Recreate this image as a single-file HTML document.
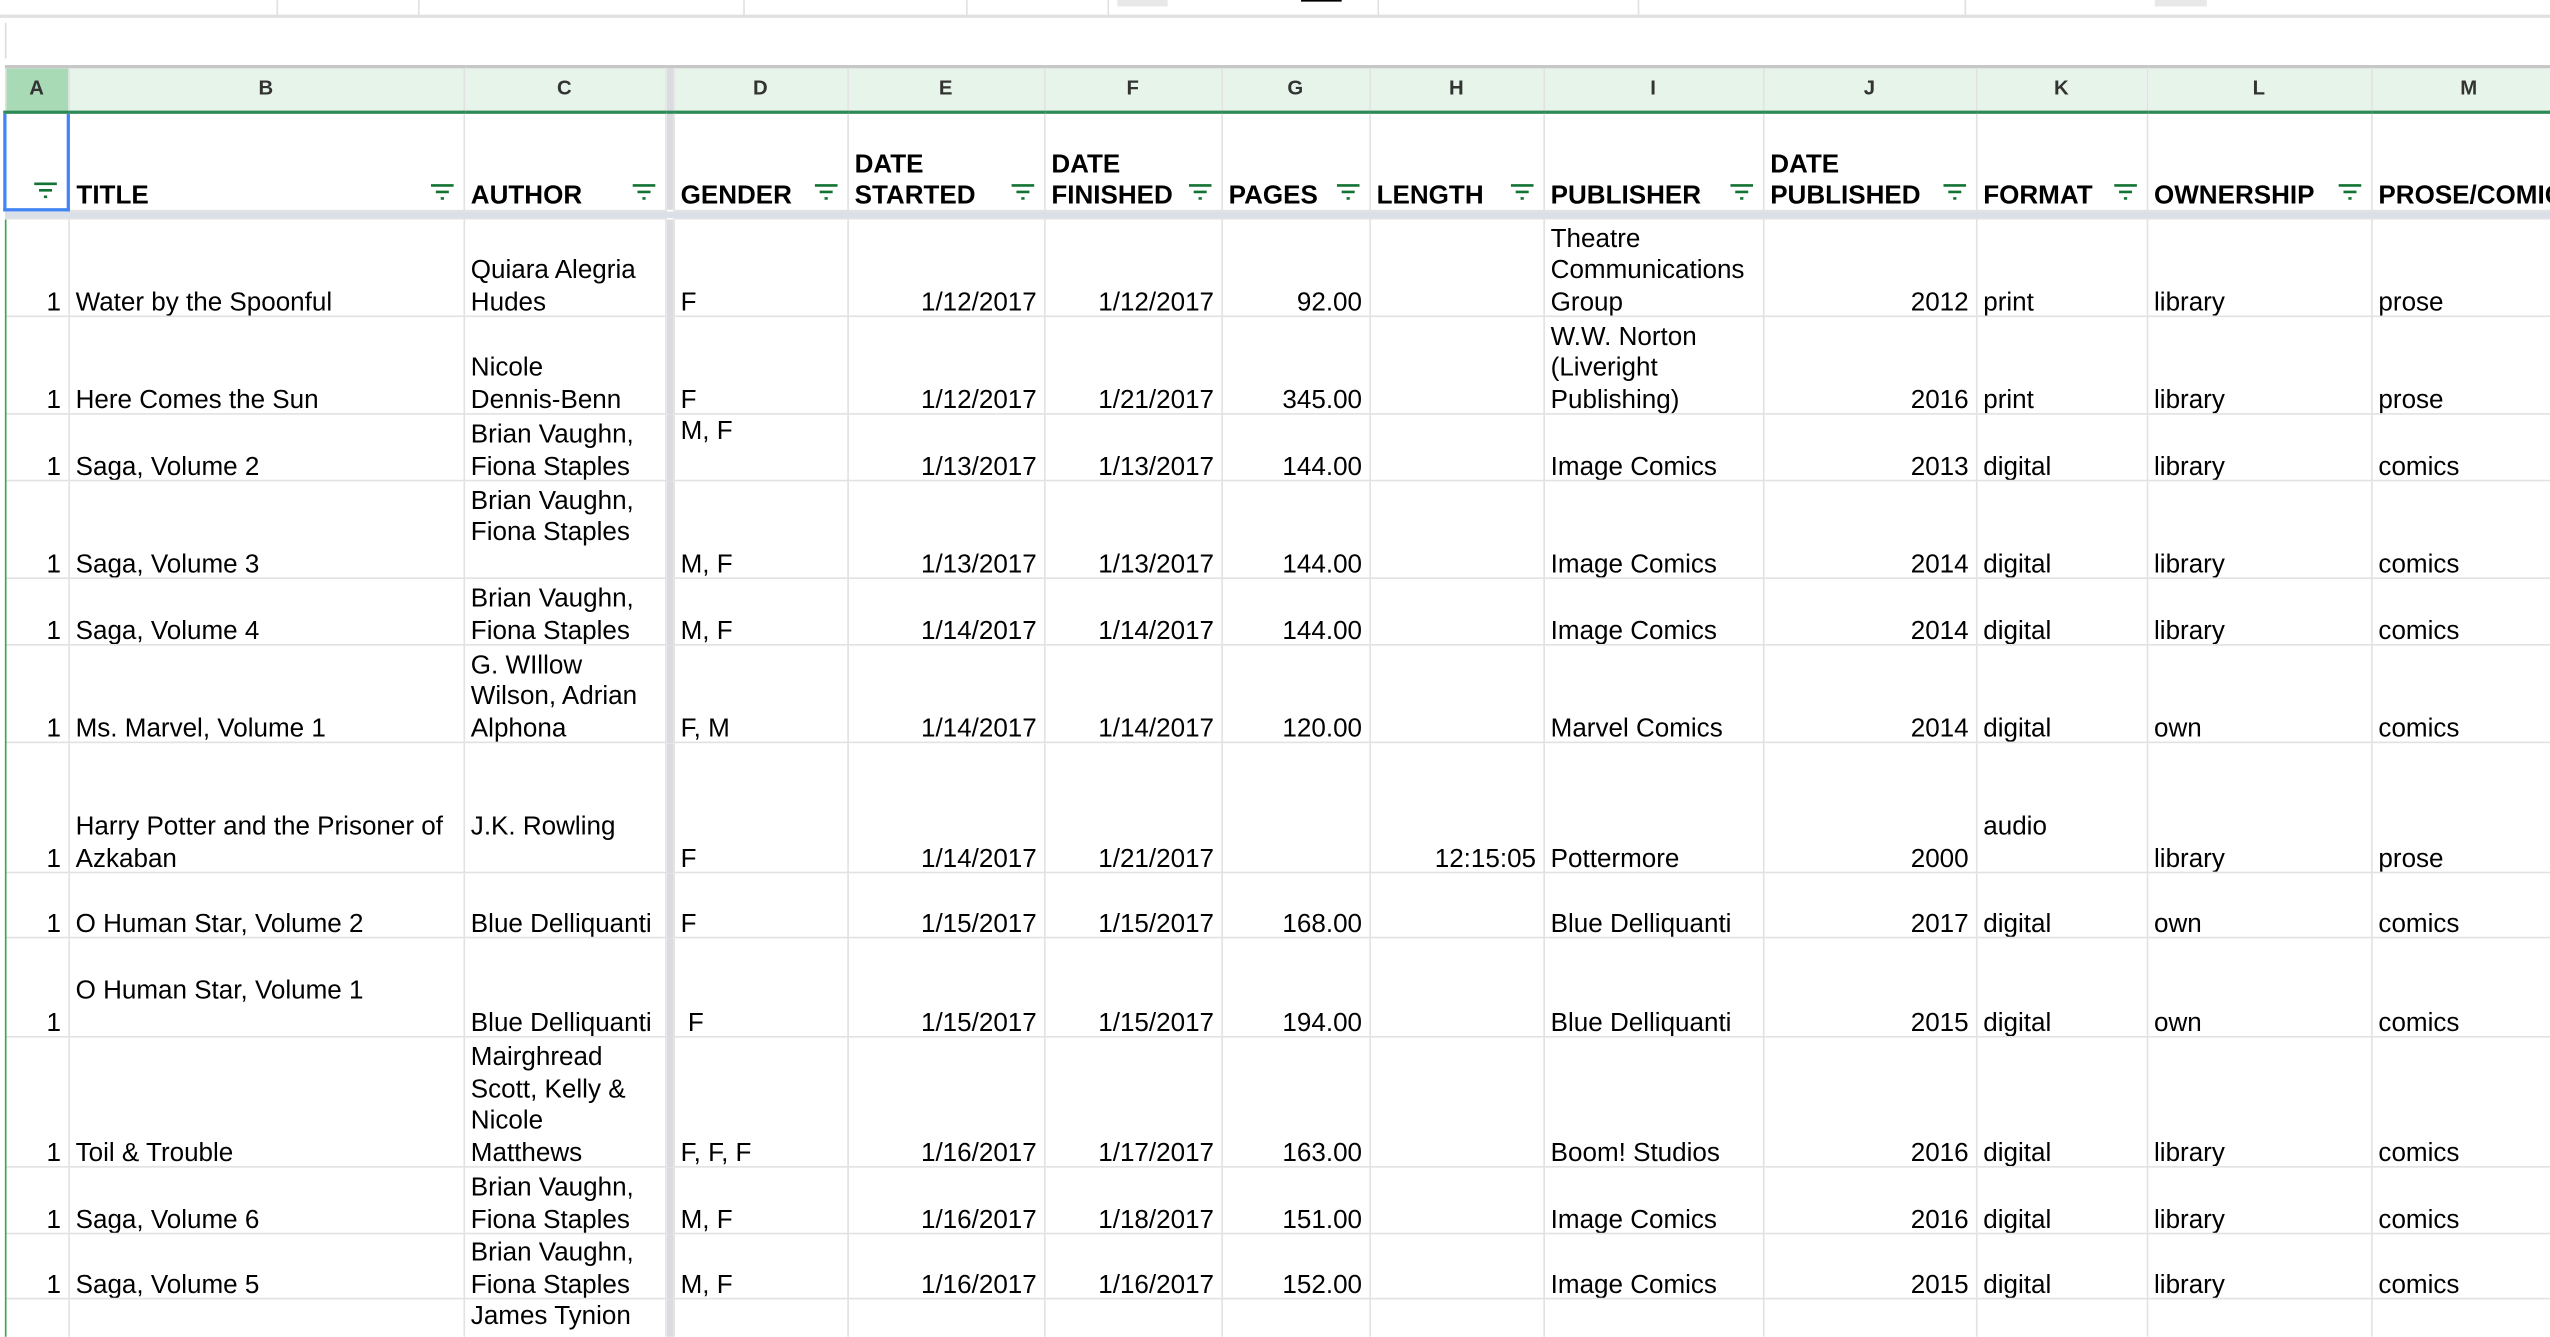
<!DOCTYPE html>
<html><head><meta charset="utf-8"><style>
html,body{margin:0;padding:0;background:#fff;}
body{width:2550px;height:1336px;overflow:hidden;position:relative;}
#w{position:absolute;left:0;top:0;width:1568px;height:822px;transform:scale(1.62628);transform-origin:0 0;overflow:hidden;font-family:"Liberation Sans",Arial,sans-serif;color:#000;}
.top{position:absolute;left:0;top:0;width:1568px;height:9px;border-bottom:2px solid #e1e1e1;}
.top i{position:absolute;top:0;height:10px;border-left:1px solid #e1e1e1;}
.fb{position:absolute;left:3px;top:14px;height:22px;border-left:1px solid #ddd;}
table{position:absolute;left:2px;top:40px;width:1575px;border-collapse:collapse;table-layout:fixed;}
td{border:1px solid #e2e2e2;font-size:16px;line-height:19.4px;padding:0 4px 0 4px;vertical-align:bottom;white-space:nowrap;overflow:hidden;}
tr.d td{padding-bottom:0;}
tr.d td span{position:relative;top:2px;}
tr.ch td{background:#e6f4ea;font-size:12.5px;font-weight:bold;color:#333;text-align:center;vertical-align:middle;padding:0;border-top:2px solid #c6c6c6;border-bottom:2px solid #2d8a57;height:26px;}
tr.ch td.a{background:#a8dab5;}
tr.h td{font-weight:bold;height:58px;position:relative;padding-bottom:0;}
tr.h td b{position:relative;top:2px;}
tr.h td svg{position:absolute;right:6px;bottom:6px;}
td.g{background:#dadce0;border-top:none;border-bottom:none;padding:0;}
tr.band td{height:4px;background:#dadfe8;padding:0;border:none;}
.r{text-align:right;}
tr.d td.t{vertical-align:top;padding-top:1px;padding-bottom:0;}
td.a1{border:2px solid #4285f4;}
.gl{position:absolute;left:3px;top:135px;width:1px;height:700px;background:#34a853;}
</style></head><body><div id="w">
<div class="top"><i style="left:170px"></i><i style="left:257px"></i><i style="left:457px"></i><i style="left:594px"></i><i style="left:681px"></i><i style="left:847px"></i><i style="left:1007px"></i><i style="left:1208px"></i>
<div style="position:absolute;left:687px;top:0;width:31px;height:4px;background:#e8e8e8"></div>
<div style="position:absolute;left:800px;top:0;width:25px;height:1px;background:#000"></div>
<div style="position:absolute;left:1325px;top:0;width:32px;height:4px;background:#e8e8e8"></div></div>
<div class="fb"></div>
<table>
<colgroup><col style="width:39px"><col style="width:243px"><col style="width:124px"><col style="width:5px"><col style="width:107px"><col style="width:121px"><col style="width:109px"><col style="width:91px"><col style="width:107px"><col style="width:135px"><col style="width:131px"><col style="width:105px"><col style="width:138px"><col style="width:120px"></colgroup>
<tr class="ch"><td class="a">A</td><td>B</td><td>C</td><td class="g" style="background:#dadce0"></td><td>D</td><td>E</td><td>F</td><td>G</td><td>H</td><td>I</td><td>J</td><td>K</td><td>L</td><td>M</td></tr>
<tr class="h">
<td class="a1"><svg width="14" height="10"><path d="M0 1H14M3 5H11M6 9H8" stroke="#137333" stroke-width="1.6"/></svg></td>
<td><b>TITLE</b><svg width="14" height="10"><path d="M0 1H14M3 5H11M6 9H8" stroke="#137333" stroke-width="1.6"/></svg></td>
<td><b>AUTHOR</b><svg width="14" height="10"><path d="M0 1H14M3 5H11M6 9H8" stroke="#137333" stroke-width="1.6"/></svg></td>
<td class="g"></td>
<td><b>GENDER</b><svg width="14" height="10"><path d="M0 1H14M3 5H11M6 9H8" stroke="#137333" stroke-width="1.6"/></svg></td>
<td><b>DATE<br>STARTED</b><svg width="14" height="10"><path d="M0 1H14M3 5H11M6 9H8" stroke="#137333" stroke-width="1.6"/></svg></td>
<td><b>DATE<br>FINISHED</b><svg width="14" height="10"><path d="M0 1H14M3 5H11M6 9H8" stroke="#137333" stroke-width="1.6"/></svg></td>
<td><b>PAGES</b><svg width="14" height="10"><path d="M0 1H14M3 5H11M6 9H8" stroke="#137333" stroke-width="1.6"/></svg></td>
<td><b>LENGTH</b><svg width="14" height="10"><path d="M0 1H14M3 5H11M6 9H8" stroke="#137333" stroke-width="1.6"/></svg></td>
<td><b>PUBLISHER</b><svg width="14" height="10"><path d="M0 1H14M3 5H11M6 9H8" stroke="#137333" stroke-width="1.6"/></svg></td>
<td><b>DATE<br>PUBLISHED</b><svg width="14" height="10"><path d="M0 1H14M3 5H11M6 9H8" stroke="#137333" stroke-width="1.6"/></svg></td>
<td><b>FORMAT</b><svg width="14" height="10"><path d="M0 1H14M3 5H11M6 9H8" stroke="#137333" stroke-width="1.6"/></svg></td>
<td><b>OWNERSHIP</b><svg width="14" height="10"><path d="M0 1H14M3 5H11M6 9H8" stroke="#137333" stroke-width="1.6"/></svg></td>
<td style="overflow:hidden"><b>PROSE/COMICS</b></td></tr>
<tr class="band"><td colspan="14"></td></tr>
<tr class="d" style="height:60px"><td class="r"><span>1</span></td><td><span>Water by the Spoonful</span></td><td><span>Quiara Alegria<br>Hudes</span></td><td class="g"></td><td><span>F</span></td><td class="r"><span>1/12/2017</span></td><td class="r"><span>1/12/2017</span></td><td class="r"><span>92.00</span></td><td></td><td><span>Theatre<br>Communications<br>Group</span></td><td class="r"><span>2012</span></td><td><span>print</span></td><td><span>library</span></td><td><span>prose</span></td></tr>
<tr class="d" style="height:60px"><td class="r"><span>1</span></td><td><span>Here Comes the Sun</span></td><td><span>Nicole<br>Dennis-Benn</span></td><td class="g"></td><td><span>F</span></td><td class="r"><span>1/12/2017</span></td><td class="r"><span>1/21/2017</span></td><td class="r"><span>345.00</span></td><td></td><td><span>W.W. Norton<br>(Liveright<br>Publishing)</span></td><td class="r"><span>2016</span></td><td><span>print</span></td><td><span>library</span></td><td><span>prose</span></td></tr>
<tr class="d" style="height:41px"><td class="r"><span>1</span></td><td><span>Saga, Volume 2</span></td><td><span>Brian Vaughn,<br>Fiona Staples</span></td><td class="g"></td><td class="t">M, F</td><td class="r"><span>1/13/2017</span></td><td class="r"><span>1/13/2017</span></td><td class="r"><span>144.00</span></td><td></td><td><span>Image Comics</span></td><td class="r"><span>2013</span></td><td><span>digital</span></td><td><span>library</span></td><td><span>comics</span></td></tr>
<tr class="d" style="height:60px"><td class="r"><span>1</span></td><td><span>Saga, Volume 3</span></td><td><span>Brian Vaughn,<br>Fiona Staples<br>&nbsp;</span></td><td class="g"></td><td><span>M, F</span></td><td class="r"><span>1/13/2017</span></td><td class="r"><span>1/13/2017</span></td><td class="r"><span>144.00</span></td><td></td><td><span>Image Comics</span></td><td class="r"><span>2014</span></td><td><span>digital</span></td><td><span>library</span></td><td><span>comics</span></td></tr>
<tr class="d" style="height:41px"><td class="r"><span>1</span></td><td><span>Saga, Volume 4</span></td><td><span>Brian Vaughn,<br>Fiona Staples</span></td><td class="g"></td><td><span>M, F</span></td><td class="r"><span>1/14/2017</span></td><td class="r"><span>1/14/2017</span></td><td class="r"><span>144.00</span></td><td></td><td><span>Image Comics</span></td><td class="r"><span>2014</span></td><td><span>digital</span></td><td><span>library</span></td><td><span>comics</span></td></tr>
<tr class="d" style="height:60px"><td class="r"><span>1</span></td><td><span>Ms. Marvel, Volume 1</span></td><td><span>G. WIllow<br>Wilson, Adrian<br>Alphona</span></td><td class="g"></td><td><span>F, M</span></td><td class="r"><span>1/14/2017</span></td><td class="r"><span>1/14/2017</span></td><td class="r"><span>120.00</span></td><td></td><td><span>Marvel Comics</span></td><td class="r"><span>2014</span></td><td><span>digital</span></td><td><span>own</span></td><td><span>comics</span></td></tr>
<tr class="d" style="height:80px"><td class="r"><span>1</span></td><td><span>Harry Potter and the Prisoner of<br>Azkaban</span></td><td><span>J.K. Rowling<br>&nbsp;</span></td><td class="g"></td><td><span>F</span></td><td class="r"><span>1/14/2017</span></td><td class="r"><span>1/21/2017</span></td><td></td><td class="r"><span>12:15:05</span></td><td><span>Pottermore</span></td><td class="r"><span>2000</span></td><td><span>audio<br>&nbsp;</span></td><td><span>library</span></td><td><span>prose</span></td></tr>
<tr class="d" style="height:40px"><td class="r"><span>1</span></td><td><span>O Human Star, Volume 2</span></td><td><span>Blue Delliquanti</span></td><td class="g"></td><td><span>F</span></td><td class="r"><span>1/15/2017</span></td><td class="r"><span>1/15/2017</span></td><td class="r"><span>168.00</span></td><td></td><td><span>Blue Delliquanti</span></td><td class="r"><span>2017</span></td><td><span>digital</span></td><td><span>own</span></td><td><span>comics</span></td></tr>
<tr class="d" style="height:61px"><td class="r"><span>1</span></td><td><span>O Human Star, Volume 1<br>&nbsp;</span></td><td><span>Blue Delliquanti</span></td><td class="g"></td><td><span>&nbsp;F</span></td><td class="r"><span>1/15/2017</span></td><td class="r"><span>1/15/2017</span></td><td class="r"><span>194.00</span></td><td></td><td><span>Blue Delliquanti</span></td><td class="r"><span>2015</span></td><td><span>digital</span></td><td><span>own</span></td><td><span>comics</span></td></tr>
<tr class="d" style="height:80px"><td class="r"><span>1</span></td><td><span>Toil &amp; Trouble</span></td><td><span>Mairghread<br>Scott, Kelly &amp;<br>Nicole<br>Matthews</span></td><td class="g"></td><td><span>F, F, F</span></td><td class="r"><span>1/16/2017</span></td><td class="r"><span>1/17/2017</span></td><td class="r"><span>163.00</span></td><td></td><td><span>Boom! Studios</span></td><td class="r"><span>2016</span></td><td><span>digital</span></td><td><span>library</span></td><td><span>comics</span></td></tr>
<tr class="d" style="height:41px"><td class="r"><span>1</span></td><td><span>Saga, Volume 6</span></td><td><span>Brian Vaughn,<br>Fiona Staples</span></td><td class="g"></td><td><span>M, F</span></td><td class="r"><span>1/16/2017</span></td><td class="r"><span>1/18/2017</span></td><td class="r"><span>151.00</span></td><td></td><td><span>Image Comics</span></td><td class="r"><span>2016</span></td><td><span>digital</span></td><td><span>library</span></td><td><span>comics</span></td></tr>
<tr class="d" style="height:40px"><td class="r"><span>1</span></td><td><span>Saga, Volume 5</span></td><td><span>Brian Vaughn,<br>Fiona Staples</span></td><td class="g"></td><td><span>M, F</span></td><td class="r"><span>1/16/2017</span></td><td class="r"><span>1/16/2017</span></td><td class="r"><span>152.00</span></td><td></td><td><span>Image Comics</span></td><td class="r"><span>2015</span></td><td><span>digital</span></td><td><span>library</span></td><td><span>comics</span></td></tr>
<tr class="d" style="height:60px"><td></td><td></td><td class="t">James Tynion</td><td class="g"></td><td></td><td></td><td></td><td></td><td></td><td></td><td></td><td></td><td></td><td></td></tr>
</table>
<div class="gl"></div>
</div></body></html>
